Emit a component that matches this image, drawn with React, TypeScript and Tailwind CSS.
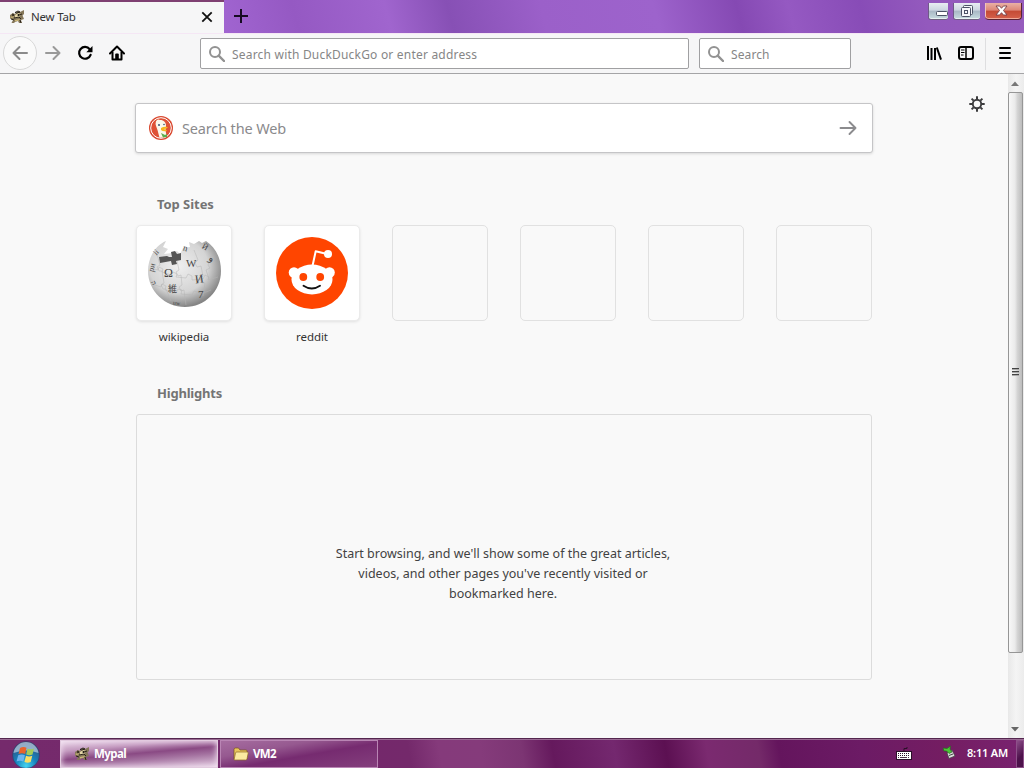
import type { ReactNode } from "react";

const sites = [
  { label: "wikipedia", icon: <WikipediaLogo /> },
  { label: "reddit", icon: <RedditLogo /> },
];

export default function App() {
  return (
    <div className="flex h-[768px] w-[1024px] flex-col overflow-hidden bg-[#f9f9f9] font-['Noto_Sans','Open_Sans',sans-serif] text-black">
      <TabStrip />
      <Toolbar />
      <main className="flex min-h-0 flex-1">
        <NewTabPage />
        <Scrollbar />
      </main>
      <Taskbar />
    </div>
  );
}

function TabStrip() {
  return (
    <header className="flex h-[33px] shrink-0 bg-[linear-gradient(75deg,#a064d0_0%,#a064d0_22%,#9559c3_29%,#a065ce_38%,#8750b5_44%,#9b60c9_53%,#9d63cc_64%,#8549b3_72%,#9559c2_77%,#884cb7_84%,#9359bd_90%,#965cbd_100%)]">
      <div className="flex w-[224px] items-center border-t-2 border-[#7f4072] bg-[#f6f6f7] pr-[10px] pb-px pl-[9px]">
        <Raccoon />
        <span className="ml-[6px] flex-1 text-[11.5px] leading-4 tracking-[-0.2px] text-[#333]">New Tab</span>
        <svg width="14" height="14" viewBox="0 0 14 14" fill="none" stroke="#111" strokeWidth="1.8">
          <path d="M2.3 2.3l9.4 9.4M11.7 2.3l-9.4 9.4" />
        </svg>
      </div>
      <svg className="mt-2 ml-[9px]" width="16" height="16" viewBox="0 0 16 16" stroke="#160b22" strokeWidth="2">
        <path d="M8 1v14M1 8h14" />
      </svg>
      <div className="ml-auto flex gap-[6px] pt-[3px] pr-[2px]">
        <WindowButton>
          <svg width="19" height="17" viewBox="0 0 19 17">
            <rect x="7.500" y="8.500" width="11" height="4" rx="1" fill="#fff" stroke="#4c5367" />
          </svg>
        </WindowButton>
        <WindowButton wide>
          <svg width="26" height="17" viewBox="0 0 26 17" fill="#f5f7fa" stroke="#4c5367">
            <rect x="9.500" y="2.500" width="9" height="9" rx="1" />
            <rect x="7.500" y="4.500" width="9" height="9" rx="1" />
            <rect x="10.500" y="7.500" width="3" height="3" />
          </svg>
        </WindowButton>
        <div className="-ml-px flex h-[17px] w-[37px] items-center justify-center rounded-b-[4px] border-r border-b border-[#5a2433] bg-[linear-gradient(#e9b1a5_0%,#dc8677_45%,#c44a35_50%,#d5614b_100%)] pr-[4px] pb-px shadow-[inset_1px_0_0_#f0c4bb,inset_0_-1px_0_#f0aa9b]">
          <svg width="13" height="11" viewBox="0 0 13 11">
            <path d="M1 1h3.6l1.9 2.3L8.4 1H12L8.5 5.5 12 10H8.4L6.5 7.7 4.6 10H1l3.5-4.5z" fill="#fff" stroke="#753e48" strokeWidth=".9" />
          </svg>
        </div>
      </div>
    </header>
  );
}

function WindowButton({ children, wide }: { children: ReactNode; wide?: boolean }) {
  return (
    <div
      className={`${wide ? "w-[26px]" : "w-[19px]"} h-[17px] rounded-b-[3px] border-b border-[#706080] bg-[linear-gradient(#e8edf2_0%,#cdd6e1_45%,#a9b8c5_50%,#c7dcdf_100%)] shadow-[inset_0_-1px_0_#e7f1f3,-1px_0_0_#6f5a87]`}
    >
      {children}
    </div>
  );
}

function Toolbar() {
  return (
    <nav className="flex h-[41px] shrink-0 items-center border-t border-b border-t-[#f5e7f5] border-b-[#a5a5a7] bg-[#f6f6f7]">
      <div className="-mt-px ml-[3px] flex size-[34px] shrink-0 items-center justify-center rounded-full border border-[#d8d8d8] bg-[#fafafa]">
        <svg width="16" height="16" viewBox="0 0 16 16" fill="none" stroke="#8b8b8b" strokeWidth="2" strokeLinecap="round" strokeLinejoin="round">
          <path d="M15 8H1.5M7.5 2l-6 6 6 6" />
        </svg>
      </div>
      <svg className="-mt-px ml-2" width="16" height="16" viewBox="0 0 16 16" fill="none" stroke="#999" strokeWidth="2" strokeLinecap="round" strokeLinejoin="round">
        <path d="M1 8h13.5M8.500 2l6 6-6 6" />
      </svg>
      <svg className="-mt-px ml-4" width="16" height="16" viewBox="0 0 16 16">
        <path d="M12.700 4.200A5.900 5.900 0 1 0 13.600 9.800" fill="none" stroke="#000" strokeWidth="2.200" strokeLinecap="round" />
        <path d="M15.500 1v6.200H9.300z" fill="#000" />
      </svg>
      <svg className="-mt-px ml-4" width="16" height="16" viewBox="0 0 16 16">
        <path d="M1 8.500L8 1.500l7 7" fill="none" stroke="#000" strokeWidth="2" strokeLinecap="round" strokeLinejoin="round" />
        <path d="M3.500 7v7.500h9V7" fill="none" stroke="#000" strokeWidth="2" strokeLinejoin="round" />
        <path d="M6.200 15V9.500q0-1 1-1h1.600q1 0 1 1V15z" fill="#000" />
      </svg>
      <div className="ml-[75px] flex h-[31px] w-[489px] items-center rounded-[2px] border border-[#a0a0a2] bg-white pl-2">
        <Magnifier />
        <span className="ml-[7px] pt-[2px] text-[12px] leading-4 tracking-[0.2px] text-[#868686]">Search with DuckDuckGo or enter address</span>
      </div>
      <div className="ml-[10px] flex h-[31px] w-[152px] items-center rounded-[2px] border border-[#a0a0a2] bg-white pl-2">
        <Magnifier />
        <span className="ml-[7px] pt-[2px] text-[12px] leading-4 tracking-[0.1px] text-[#868686]">Search</span>
      </div>
      <svg className="-mt-px ml-[75px]" width="16" height="16" viewBox="0 0 16 16" stroke="#000" strokeWidth="2">
        <path d="M2 1v14M5.500 3v12M9 3v12M10.800 2.500L15 14.700" />
      </svg>
      <svg className="-mt-px ml-4" width="16" height="16" viewBox="0 0 16 16">
        <rect x="1" y="2" width="14" height="12" rx="2" fill="none" stroke="#000" strokeWidth="2" />
        <path d="M8 2v12" stroke="#000" strokeWidth="1.500" />
        <path d="M3 5h3.500M3 7.500h3.500M3 10h2.500" stroke="#000" />
      </svg>
      <div className="ml-[11px] h-8 w-px bg-[#dedee0]" />
      <svg className="-mt-px ml-[13px]" width="12" height="12" viewBox="0 0 12 12" stroke="#000" strokeWidth="2" strokeLinecap="round">
        <path d="M1 1h10M1 6h10M1 11h10" />
      </svg>
    </nav>
  );
}

function Magnifier() {
  return (
    <svg width="16" height="16" viewBox="0 0 16 16" fill="none" stroke="#929292">
      <circle cx="6" cy="6" r="5" strokeWidth="2" />
      <path d="M9.700 9.700l5.300 5.300" strokeWidth="2.400" strokeLinecap="round" />
    </svg>
  );
}

function NewTabPage() {
  return (
    <div className="relative flex-1 bg-[#f9f9f9] pl-[135px]">
      <svg className="absolute top-[22px] left-[969px]" width="16" height="16" viewBox="0 0 16 16" fill="none" stroke="#3c3c3e">
        <circle cx="8" cy="8" r="4.200" strokeWidth="1.900" />
        <path d="M8 .3v3M8 12.700v3M.3 8h3M12.700 8h3M2.600 2.600l2 2M11.400 11.400l2 2M2.600 13.400l2-2M11.400 4.600l2-2" strokeWidth="2" />
      </svg>
      <div className="mt-[29px] flex h-[50px] w-[738px] items-center rounded-[3px] border border-[#c5c5c7] bg-white pr-[15px] pl-[13px] shadow-[0_1px_3px_#00000022]">
        <DuckLogo />
        <span className="ml-[9px] flex-1 pb-px text-[14.5px] leading-5 tracking-[-0.15px] text-[#8a8a8c]">Search the Web</span>
        <svg width="18" height="16" viewBox="0 0 18 16" fill="none" stroke="#8b8b8e" strokeWidth="1.900" strokeLinecap="round" strokeLinejoin="round">
          <path d="M1.500 8h15M10.500 2l6 6-6 6" />
        </svg>
      </div>

      <h2 className="mt-[41px] pl-[22px] text-[13px] leading-5 font-bold tracking-[-0.05px] text-[#747474]">Top Sites</h2>
      <div className="mt-[11px] ml-px flex gap-8">
        {sites.map((s) => (
          <div key={s.label} className="w-24">
            <div className="flex size-24 items-center justify-center rounded-[5px] border border-[#ebebeb] bg-white shadow-[0_1px_3px_#0000001a]">
              {s.icon}
            </div>
            <div className="mt-[7px] -ml-[3px] w-[102px] text-center text-[11.5px] leading-[18px] tracking-[-0.08px] text-[#333]">{s.label}</div>
          </div>
        ))}
        {[0, 1, 2, 3].map((i) => (
          <div key={i} className="size-24 rounded-[5px] border border-[#e1e1e1]" />
        ))}
      </div>

      <h2 className="mt-[37px] pl-[22px] text-[13px] leading-5 font-bold tracking-[-0.2px] text-[#747474]">Highlights</h2>
      <div className="mt-[11px] ml-px flex h-[266px] w-[736px] justify-center rounded-[3px] border border-[#dcdcdc] pt-[129px] pr-[2px]">
        <p className="text-center text-[12.5px] leading-5 text-[#424242]">
          Start browsing, and we'll show some of the great articles,
          <br />
          videos, and other pages you've recently visited or
          <br />
          bookmarked here.
        </p>
      </div>
    </div>
  );
}

function Scrollbar() {
  return (
    <div className="flex w-4 shrink-0 flex-col bg-[linear-gradient(90deg,#e8e8e8,#f4f4f4_50%,#ececec)]">
      <div className="flex h-[18px] items-center pl-[3px]">
        <svg width="8" height="5" viewBox="0 0 8 5">
          <path d="M0 5l4-4.500L8 5z" fill="#777" />
        </svg>
      </div>
      <div className="flex h-[561px] w-[15px] flex-col items-center justify-center gap-px rounded-[2px] border border-[#969696] bg-[linear-gradient(90deg,#f8f8f8_0%,#ebebeb_45%,#d4d4d4_65%,#bcbcbc_100%)] pb-px">
        {[0, 1, 2].map((i) => (
          <div key={i} className="h-[2px] w-[7px] border-t border-[#444] bg-[#aaa]" />
        ))}
      </div>
      <div className="mt-auto flex h-[17px] items-center pl-[3px]">
        <svg width="8" height="5" viewBox="0 0 8 5">
          <path d="M0 0l4 4.500L8 0z" fill="#666" />
        </svg>
      </div>
    </div>
  );
}

function Taskbar() {
  return (
    <footer className="flex h-[30px] shrink-0 border-t border-[#54264f] bg-[linear-gradient(80deg,#752a6c_0%,#74286b_36%,#74296b_40%,#853a7b_43%,#853b7b_47%,#7c3573_51%,#65195d_54%,#74286f_60%,#5c1052_65%,#7b2a70_69%,#742a69_74%,#64155d_76%,#6c1b65_84%,#741d62_92%,#792370_100%)] pt-px text-white shadow-[inset_0_1px_0_#9b6c95]">
      <div className="flex w-[60px] shrink-0 items-start justify-center pr-[9px]">
        <StartOrb />
      </div>
      <div className="flex w-[158px] items-center border border-[#e2cadf] bg-[linear-gradient(175deg,#ead7e9_0%,#c49bc0_26%,#8a4a84_48%,#a472a0_65%,#e4cee2_100%)] pl-[13px] shadow-[inset_0_0_6px_#f5e5f4]">
        <Raccoon />
        <span className="ml-[4px] text-[11.500px] leading-4 font-bold tracking-[-0.6px]">Mypal</span>
      </div>
      <div className="ml-[2px] flex w-[158px] items-center border border-[#b985b4] bg-[linear-gradient(170deg,#a66da0_0%,#965990_30%,#762b70_55%,#843f7d_100%)] pb-px pl-3">
        <svg width="16" height="14" viewBox="0 0 16 14">
          <path d="M1 12V2.500Q1 1 2.500 1h3L7 3h6q1 0 1 1v8z" fill="#e8c65c" stroke="#77511b" strokeWidth=".7" />
          <path d="M1 13l1.500-7q.2-1 1.200-1h10.500q1.200 0 1 1l-1.200 6q-.2 1-1.200 1z" fill="#fbeaa0" stroke="#8c6725" strokeWidth=".7" />
        </svg>
        <span className="ml-[4px] text-[11.500px] leading-4 font-bold tracking-[-0.7px]">VM2</span>
      </div>
      <div className="ml-auto flex items-center">
        <svg className="mb-[3px]" width="16" height="14" viewBox="0 0 16 14">
          <path d="M8 5V2.500h3V1" stroke="#2b1029" fill="none" />
          <rect x=".5" y="5.500" width="15" height="8" fill="#fff" stroke="#2b1029" />
          <path d="M2 7.500h12M2 9.500h12" stroke="#2b1029" strokeDasharray="1 1" />
          <path d="M2 11.500h1M4 11.500h7M12 11.500h1" stroke="#4c3549" />
        </svg>
        <svg className="mb-[3px] ml-[30px]" width="14" height="15" viewBox="0 0 14 15">
          <path d="M5 8l5-3 3 6-6 2.500z" fill="#ddd" stroke="#444" strokeWidth=".8" />
          <path d="M7 10.500l4-1.500" stroke="#444" />
          <path d="M1 3l4 .500L8.500 1l-.5 3 2 3-3 1.500L4.500 6 2 6z" fill="#4bc436" stroke="#286a23" strokeWidth=".7" />
        </svg>
        <span className="mb-[2px] ml-[11px] w-[49px] text-[11px] leading-4 font-semibold whitespace-nowrap tracking-[-0.2px]">8:11 AM</span>
        <div className="h-full w-2 border border-[#8d5089] bg-[linear-gradient(135deg,#8b4c88,#4d124b_60%)]" />
      </div>
    </footer>
  );
}

function StartOrb() {
  return (
    <svg width="28" height="29" viewBox="0 0 28 29">
      <defs>
        <radialGradient id="orb" cx=".5" cy=".9" r=".85">
          <stop offset="0" stopColor="#48d4ef" />
          <stop offset=".45" stopColor="#1683bd" />
          <stop offset="1" stopColor="#33507d" />
        </radialGradient>
      </defs>
      <circle cx="14" cy="15" r="13.500" fill="url(#orb)" stroke="#3a3362" strokeWidth=".6" />
      <path d="M1.500 13a12.600 12.600 0 0 1 25 0q-12-5-25 0z" fill="#c9d9e8" fillOpacity=".65" />
      <path d="M8 8q3.500-2 6.500-.2L13.200 14Q10 12.500 6.500 14z" fill="#e9632b" />
      <path d="M15.500 8.400q3 1.700 6.500 0L20.500 14.500q-3 1.500-6.300 0z" fill="#a3ca58" />
      <path d="M6.200 15.200q3.500-1.500 6.700 0L11.300 21.500Q8 20 4.500 21.500z" fill="#6db4ee" />
      <path d="M14 15.700q3.200 1.500 6.300 0L18.700 22q-3 1.500-6.300 0z" fill="#fbdd62" />
    </svg>
  );
}

function Raccoon() {
  return (
    <svg className="shrink-0" width="16" height="16" viewBox="0 0 16 16">
      <path d="M1 6l3-2 2 1 3-3 2 1 4-2v4l-1.500 1.500L15 10l-3 1 1 3h-3l-1-2-3 1-1 1H2.500L4 11 1 9.500z" fill="#85775a" />
      <path d="M6 6l3-2 3 1-2 3-4 1z" fill="#e5d7a8" />
      <path d="M1 8l3-1 1 1-2 1zM6 11l5-1-1 1.500-4 1z" fill="#cdb878" />
      <path d="M6 3.500l3-1.500 2 1-3 1zM3 5l2 1-2 1M10 6l3-1M5 9l5-1 2 2M2 10l3 1M11 11l1 3" stroke="#1f1a12" strokeWidth=".9" fill="none" />
      <circle cx="9.500" cy="6" r="1" fill="#15120d" />
    </svg>
  );
}

function DuckLogo() {
  return (
    <svg width="24" height="24" viewBox="0 0 24 24">
      <circle cx="12" cy="12" r="12" fill="#d9482f" />
      <circle cx="12" cy="12" r="10.300" fill="#df5236" stroke="#fff" strokeWidth="1" />
      <path d="M8 4q1-1 3 0c4 0 6 2.500 6 6l-.5 4 1 6q-3 2-7 1.800L8.500 14Q5 6 8 4z" fill="#faf8eb" />
      <path d="M12 12q3-2 7-1-1 2-4 2 3 1 3 2-4 1-6-1z" fill="#f6b51e" />
      <path d="M12 17l4 2 2-1v3l-4 .5z" fill="#5cad4c" />
      <circle cx="10" cy="9" r="1" fill="#375674" />
      <circle cx="15" cy="8.500" r=".8" fill="#375674" />
    </svg>
  );
}

function RedditLogo() {
  return (
    <svg width="72" height="72" viewBox="0 0 72 72">
      <circle cx="36" cy="36" r="36" fill="#ff4500" />
      <path d="M36.500 29l3.200-14.700L51 17" fill="none" stroke="#fff" strokeWidth="2" strokeLinejoin="round" />
      <g fill="#fff">
        <circle cx="52" cy="17" r="4" />
        <circle cx="18" cy="35.500" r="5.300" />
        <circle cx="53.500" cy="35.500" r="5.300" />
        <ellipse cx="36" cy="42.500" rx="20.500" ry="15" />
      </g>
      <circle cx="27.300" cy="40" r="3.900" fill="#ff4500" />
      <circle cx="44.200" cy="40" r="3.900" fill="#ff4500" />
      <path d="M27.500 48.700q8.300 5.500 16.500 0" fill="none" stroke="#111" strokeWidth="1.900" strokeLinecap="round" />
    </svg>
  );
}

function WikipediaLogo() {
  return (
    <svg width="76" height="72" viewBox="0 0 76 72">
      <defs>
        <radialGradient id="globe" cx=".42" cy=".38" r=".62">
          <stop offset="0" stopColor="#efefef" />
          <stop offset=".65" stopColor="#d4d4d4" />
          <stop offset="1" stopColor="#858585" />
        </radialGradient>
      </defs>
      <path
        d="M20 4l-3 6 5 2-4 5 8-1 5-2 3 3 3-6 7-1-1-5 5 2 5-3 3 2 4-2c9 6 15 16 15 30 0 20-16 36-36 36S2 54 2 34C2 20 10 8 20 4z"
        fill="url(#globe)"
      />
      <path d="M13 20l8-1 2 1h3l-1-5 4-1 2 3 4-1v7l-5 1 1 3-5 1-1-4-11 2z" fill="#555" />
      <g fill="none" stroke="#b5b5b5" strokeWidth=".5">
        <path d="M4 31l8 2 1-3 4 2-1 3 9 3 2-3 4 2-1 3 10 1 2-4 4 2v4l11-1 2-4 4 2-1 3 10-3" />
        <path d="M6 47l9 3 1-3 4 2-1 4 11 3 2-4 4 1-1 4 11 1 2-4 4 1 1 3 12-5" />
        <path d="M31 24l2 9-3 2 2 4 3-1 1 10-3 2 2 4 3-1 2 15M48 13l4 10-3 3 2 4 4-1 2 10-3 3 2 4 3 0-2 13M11 17l3 11-3 2 2 4 3 0 2 12-3 2 2 4 3 0 5 12M65 19l-3 9 2 3-4 2 3 9" />
      </g>
      <g fill="#444" fontFamily="Liberation Serif, serif">
        <text x="18" y="40" fontSize="12">Ω</text>
        <text x="40" y="30" fontSize="11">W</text>
        <text x="49" y="46" fontSize="12" transform="rotate(-8 52 42)">И</text>
        <text x="22" y="55" fontSize="9" style={{ fontFamily: "Noto Sans CJK JP, sans-serif" }}>維</text>
        <text x="52" y="61" fontSize="11">7</text>
        <text x="56" y="12" fontSize="8" transform="rotate(30 58 10)">Й</text>
        <text x="37" y="14" fontSize="9" transform="rotate(15 40 12)">n</text>
        <text x="64" y="24" fontSize="10" transform="rotate(25 66 20)">و</text>
        <text x="4" y="33" fontSize="8" transform="rotate(-75 7 32)">ри</text>
        <text x="6" y="47" fontSize="7" transform="rotate(60 7 45)">ה</text>
        <text x="27" y="68" fontSize="6" transform="rotate(8 31 66)">uw</text>
        <text x="8" y="17" fontSize="8" transform="rotate(-45 11 15)">ii</text>
      </g>
    </svg>
  );
}
